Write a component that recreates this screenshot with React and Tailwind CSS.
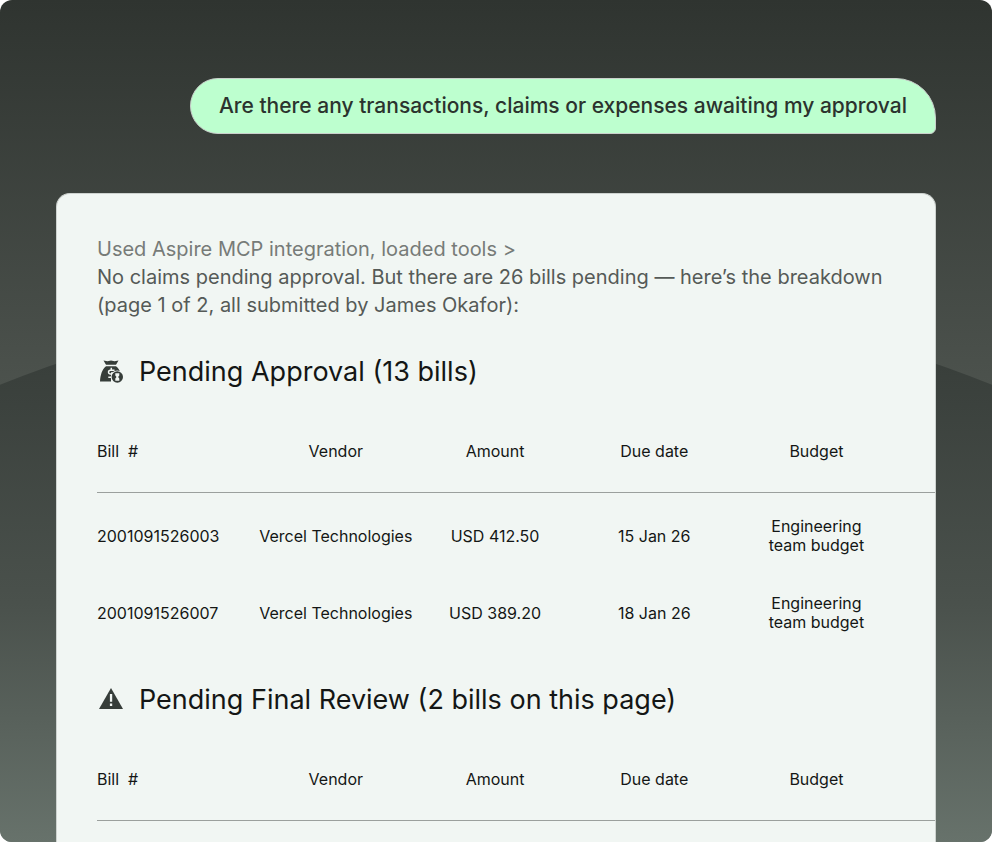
const columns = ['Vendor', 'Amount', 'Due date', 'Budget'];

const pendingApproval = [
  { id: '2001091526003', vendor: 'Vercel Technologies', amount: 'USD 412.50', due: '15 Jan 26' },
  { id: '2001091526007', vendor: 'Vercel Technologies', amount: 'USD 389.20', due: '18 Jan 26' },
];

function MoneyBagIcon() {
  return (
    <svg viewBox="0 0 24 24" className="size-6 shrink-0" aria-hidden="true">
      <path
        fill="#363d39"
        d="M4.500 0.500l4 .8L12 .5l3.500.8 4-.8-2.500 4.300H7zM7 6.300h10c2.200 1.600 3.400 3.400 4.200 6H12v9.200H1C1.400 15 3 9.500 7 6.300z"
      />
      <path
        fill="none"
        stroke="#f1f6f3"
        strokeWidth="1.500"
        d="M15.500 10.200h-4a1.900 1.900 0 0 0 0 3.900h2M12.300 7.800v2.400M9.300 17.300h3"
      />
      <circle cx="18.300" cy="17" r="6.600" fill="#f1f6f3" />
      <circle cx="18.300" cy="17" r="5.700" fill="#363d39" />
      <path fill="#f1f6f3" d="M16.300 13.300h4v2.200l-1.200 1.500 1.200 1.500v2.200h-4v-2.200l1.200-1.500-1.200-1.500z" />
    </svg>
  );
}

function WarningIcon() {
  return (
    <svg viewBox="0 0 24 24" className="size-6 shrink-0" aria-hidden="true">
      <path fill="#363d39" d="M12 0L24 21H0z" />
      <path fill="#f1f6f3" d="M10.900 6h2.300v7.800h-2.300zM10.900 15.500h2.300v2.500h-2.300z" />
    </svg>
  );
}

function Backdrop() {
  return (
    <svg
      viewBox="0 0 992 842"
      preserveAspectRatio="none"
      className="absolute inset-0 -z-10 size-full"
      aria-hidden="true"
    >
      <defs>
        <linearGradient id="sky" x1="0" y1="0" x2="0" y2="1">
          <stop offset="0" stopColor="#2f3430" />
          <stop offset="0.46" stopColor="#4c524d" />
          <stop offset="1" stopColor="#68736c" />
        </linearGradient>
        <linearGradient id="hill" gradientUnits="userSpaceOnUse" x1="0" y1="364" x2="0" y2="842">
          <stop offset="0" stopColor="#393f3b" />
          <stop offset="0.5" stopColor="#4a514c" />
          <stop offset="1" stopColor="#67726b" />
        </linearGradient>
      </defs>
      <rect width="992" height="842" fill="url(#sky)" />
      <circle cx="496" cy="1622" r="1333" fill="url(#hill)" />
    </svg>
  );
}

function BillSection({ icon, title, bills }) {
  return (
    <section className="mt-[35px]">
      <h2 className="flex items-center gap-4 pl-0.5 text-[27px] leading-9 text-[#141615]">
        {icon}
        {title}
      </h2>
      <table className="mt-[52px] w-full table-fixed text-base leading-[19px] text-[#141615]">
        <thead>
          <tr className="border-b border-[#9ba09d]">
            <th className="w-[19%] pb-[31px] text-left font-normal whitespace-pre">{'Bill  #'}</th>
            {columns.map((column) => (
              <th key={column} className="w-[19%] pb-[31px] font-normal last:w-auto last:pr-9">
                {column}
              </th>
            ))}
          </tr>
        </thead>
        <tbody className="text-center">
          {bills.map((bill) => (
            <tr key={bill.id}>
              <td className="pt-6 pb-[15px] text-left">{bill.id}</td>
              <td className="pt-6 pb-[15px]">{bill.vendor}</td>
              <td className="pt-6 pb-[15px]">{bill.amount}</td>
              <td className="pt-6 pb-[15px]">{bill.due}</td>
              <td className="pt-6 pr-9 pb-[15px]">
                Engineering
                <br />
                team budget
              </td>
            </tr>
          ))}
        </tbody>
      </table>
    </section>
  );
}

export default function App() {
  return (
    <div className="bg-white font-['Inter',sans-serif]">
      <main className="relative isolate flex min-h-screen flex-col overflow-hidden rounded-xl px-14 pt-[78px]">
        <Backdrop />
        <p className="self-end rounded-l-[28px] rounded-tr-[40px] rounded-br-md border border-[#c9cfcb] bg-[#bdffcf] px-7 py-3 text-[21px] leading-[30px] font-medium text-[#2b332e]">
          Are there any transactions, claims or expenses awaiting my approval
        </p>

        <div className="mt-[59px] flex-1 rounded-t-[14px] border border-b-0 border-[#cdd2cf] bg-[#f1f6f3] pt-[41px] pl-10">
          <div className="pr-10 text-xl leading-7 text-[#555a57]">
            <p>
              <button type="button" className="text-[#777b78]">
                Used Aspire MCP integration, loaded tools &gt;
              </button>
            </p>
            <p>
              No claims pending approval. But there are 26 bills pending — here’s the breakdown (page 1 of
              2, all submitted by James Okafor):
            </p>
          </div>

          <BillSection icon={<MoneyBagIcon />} title="Pending Approval (13 bills)" bills={pendingApproval} />
          <BillSection icon={<WarningIcon />} title="Pending Final Review (2 bills on this page)" bills={[]} />
        </div>
      </main>
    </div>
  );
}
